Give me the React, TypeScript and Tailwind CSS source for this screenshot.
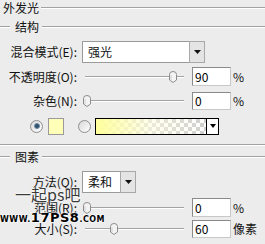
import React from "react";

function Etched({ className = "" }: { className?: string }) {
  return <div className={`h-[2px] border-t border-t-[#a2a2a2] border-b border-b-white ${className}`} />;
}

function Thumb() {
  return (
    <svg width="10" height="12" viewBox="0 0 10 12" className="absolute top-1/2 -translate-y-1/2">
      <path d="M1.5 3.5 Q1.5 0.5 5 0.5 Q8.5 0.5 8.5 3.5 V9 L5 11.5 L1.5 9 Z" fill="#f3f3f3" stroke="#8c8c8c" />
      <path d="M3 4 V9" stroke="#d0d0d0" />
    </svg>
  );
}

function Slider({ pos }: { pos: number }) {
  return (
    <div className="relative w-[110px] h-full flex items-center">
      <div className="ml-[3px] w-[99px]">
        <Etched />
      </div>
      <div className="absolute top-0 bottom-0" style={{ left: pos }}>
        <Thumb />
      </div>
    </div>
  );
}

function Field({ value }: { value: string }) {
  return (
    <div className="w-[39px] h-full bg-white border border-t-[#8a8a8a] border-l-[#8a8a8a] border-r-[#c8c8c8] border-b-[#c8c8c8] flex items-center pl-[2px] text-[12px] text-black">
      {value}
    </div>
  );
}

function Label({ children }: { children: React.ReactNode }) {
  return <div className="w-[78px] text-right pr-[1px] whitespace-nowrap">{children}</div>;
}

function SliderRow({ label, pos, value, unit, h }: { label: string; pos: number; value: string; unit: string; h: string }) {
  return (
    <div className={`flex items-center ${h}`}>
      <Label>{label}</Label>
      <div className="ml-[4px] h-full">
        <Slider pos={pos} />
      </div>
      <Field value={value} />
      <div className="ml-[2px]">{unit}</div>
    </div>
  );
}

function Arrow() {
  return (
    <svg width="7" height="4" viewBox="0 0 7 4">
      <path d="M0 0 H7 L3.5 4 Z" fill="#111" />
    </svg>
  );
}

function Dropdown({ text, w }: { text: string; w: string }) {
  return (
    <div className="ml-[4px] flex h-full">
      <div className={`${w} h-full bg-white border border-[#9a9a9a] border-r-0 flex items-center pl-[5px]`}>{text}</div>
      <div className="w-[16px] h-full bg-[#e4e4e4] border border-[#a8a8a8] flex items-center justify-center">
        <Arrow />
      </div>
    </div>
  );
}

function Radio({ checked }: { checked: boolean }) {
  return (
    <div className="w-[13px] h-[13px] rounded-full border border-[#8e8e8e] bg-gradient-to-br from-[#d8d8d8] to-white flex items-center justify-center">
      {checked && <div className="w-[6px] h-[6px] rounded-full bg-[#2f4f6a] border border-[#6a8aa5]" />}
    </div>
  );
}

export default function App() {
  return (
    <div className="relative w-[265px] h-[244px] overflow-hidden bg-[#ececec] text-[12px] leading-none text-[#111] font-['Noto_Sans_CJK_SC',sans-serif]">
      <div className="flex flex-col">
        <div className="flex items-center h-[16px]">
          <div className="pl-[3px]">外发光</div>
          <Etched className="flex-1 ml-[2px]" />
        </div>
        <div className="flex items-center h-[22px]">
          <Etched className="w-[10px]" />
          <div className="ml-[5px]">结构</div>
          <Etched className="flex-1 ml-[3px]" />
        </div>
        <div className="flex items-center h-[22px] mt-[3px]">
          <Label>混合模式(E):</Label>
          <Dropdown text="强光" w="w-[107px]" />
        </div>
        <div className="mt-[4px]">
          <SliderRow label="不透明度(O):" pos={86} value="90" unit="%" h="h-[19px]" />
        </div>
        <div className="mt-[6px]">
          <SliderRow label="杂色(N):" pos={0} value="0" unit="%" h="h-[18px]" />
        </div>
        <div className="flex items-center h-[16px] mt-[8px] pl-[30px]">
          <Radio checked />
          <div className="ml-[5px] w-[16px] h-[17px] bg-[#ffffb8] border border-[#9a9a9a]" />
          <div className="ml-[14px]">
            <Radio checked={false} />
          </div>
          <div className="ml-[4px] w-[124px] h-[17px] border border-black flex">
            <div className="flex-1 h-full bg-[repeating-conic-gradient(#cfcfcf_0%_25%,#ffffff_0%_50%)] bg-[length:8px_8px]">
              <div className="w-full h-full bg-gradient-to-r from-[#ffff9c] via-[#fffde0]/60 to-transparent" />
            </div>
            <div className="w-[12px] h-full border-l border-black bg-white flex items-center justify-center">
              <svg width="6" height="4" viewBox="0 0 6 4">
                <path d="M0 0 H6 L3 4 Z" fill="#000" />
              </svg>
            </div>
          </div>
        </div>
        <Etched className="mt-[10px]" />
        <div className="flex items-center h-[22px]">
          <Etched className="w-[10px]" />
          <div className="ml-[5px]">图素</div>
          <Etched className="flex-1 ml-[3px]" />
        </div>
        <div className="flex items-center h-[22px] mt-[3px]">
          <Label>方法(Q):</Label>
          <Dropdown text="柔和" w="w-[38px]" />
        </div>
        <div className="mt-[5px]">
          <SliderRow label="范围(R):" pos={0} value="0" unit="%" h="h-[19px]" />
        </div>
        <div className="mt-[3px]">
          <SliderRow label="大小(S):" pos={27} value="60" unit="像素" h="h-[18px]" />
        </div>
      </div>

      <div className="absolute left-[15px] top-[186px] text-[16px] leading-none text-[#3a3a3a] [text-shadow:0_0_2px_#fff,0_0_2px_#fff,0_0_1px_#fff] whitespace-nowrap">
        一起ps吧
      </div>
      <div className="absolute left-0 top-[211px] flex items-end whitespace-nowrap font-['DejaVu_Sans',sans-serif] font-bold text-black leading-none [text-shadow:0_0_2px_#fff,0_0_2px_#fff,0_0_2px_#fff]">
        <span className="text-[8px] tracking-[0.5px]">WWW.</span>
        <span className="text-[13px] tracking-[0.5px]">17PS8</span>
        <span className="text-[8px] tracking-[0.5px]">.COM</span>
      </div>
    </div>
  );
}
